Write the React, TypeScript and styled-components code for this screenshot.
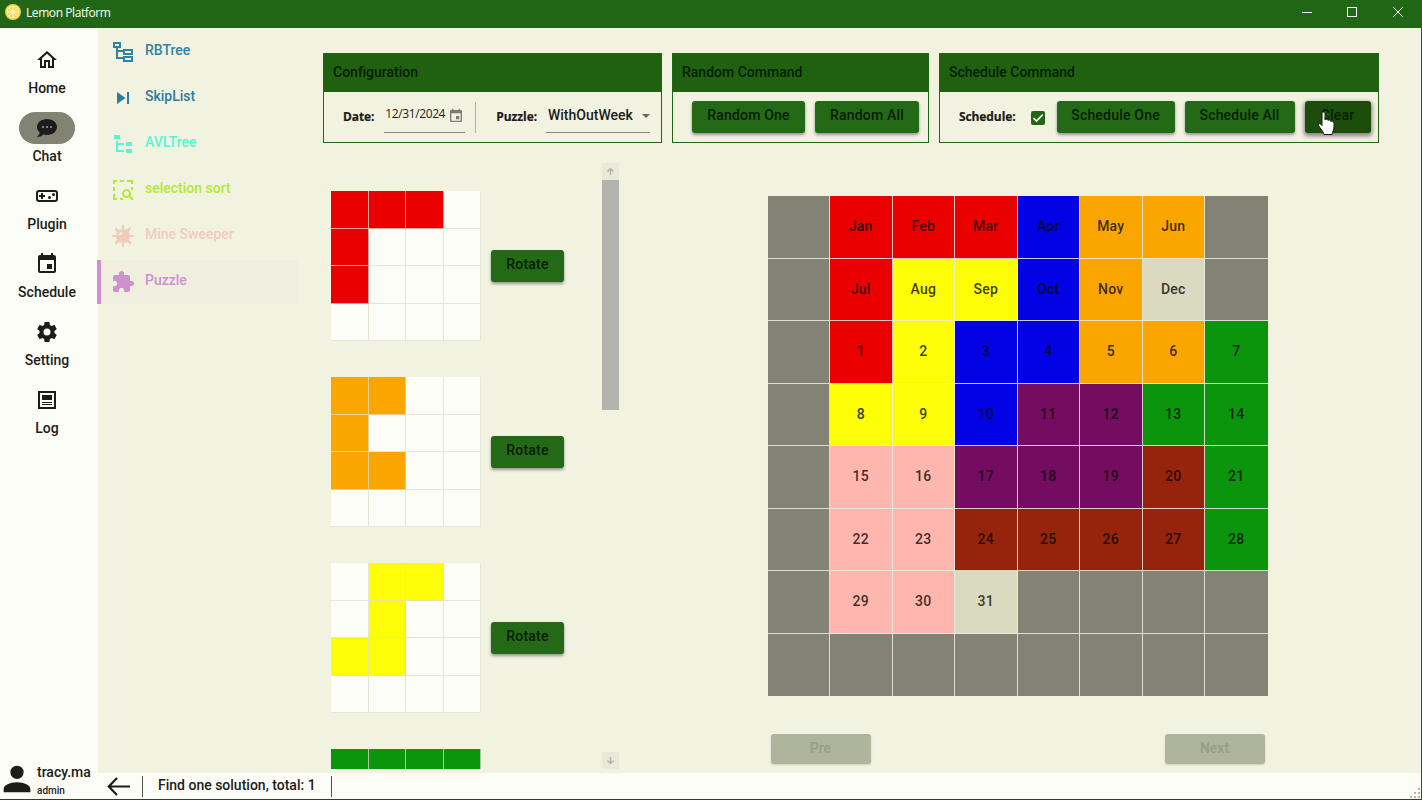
import React from 'react';
import styled, { createGlobalStyle } from 'styled-components';

const colors = {
  green: '#206614',
  greenHeader: '#1f610e',
  surface: '#f2f2e0',
  paper: '#fdfdf8',
  ink: '#1c1c18',
  wall: '#828275',
};

const GlobalStyle = createGlobalStyle`
  * { box-sizing: border-box; }
  body { margin: 0; overflow: hidden; background: ${colors.surface}; }
`;

const Window = styled.div`
  width: 1422px;
  height: 800px;
  display: flex;
  flex-direction: column;
  border-right: 1px solid ${colors.green};
  border-bottom: 1px solid #1c4d18;
  background: ${colors.surface};
  color: ${colors.ink};
  font: 500 14px/20px Roboto, sans-serif;
  overflow: hidden;
`;

const TitleBar = styled.header`
  height: 28px;
  flex: none;
  display: flex;
  align-items: center;
  padding: 0 15px 4px 5px;
  background: ${colors.green};
  color: #fff;
  font: 400 12px/16px 'Open Sans', 'Noto Sans', sans-serif;
`;
const AppName = styled.span`
  margin-left: 5px;
  padding-top: 2px;
  letter-spacing: -0.42px;
  flex: 1;
`;
const WindowButtons = styled.div`
  display: flex;
  gap: 30px;
  svg { display: block; }
`;

const Body = styled.div`
  flex: 1;
  display: flex;
  min-height: 0;
`;

const Rail = styled.nav`
  width: 98px;
  flex: none;
  display: flex;
  flex-direction: column;
  padding-top: 16px;
  background: ${colors.paper};
`;
const RailItem = styled.div`
  width: 94px;
  height: 68px;
  display: flex;
  flex-direction: column;
  align-items: center;
`;
const RailIcon = styled.span<{ $active?: boolean }>`
  width: 56px;
  height: 32px;
  border-radius: 16px;
  display: flex;
  align-items: center;
  justify-content: center;
  background: ${(p) => (p.$active ? '#828275' : 'transparent')};
`;
const RailLabel = styled.span`
  margin-top: 2px;
`;
const User = styled.div`
  margin-top: auto;
  height: 38px;
  display: flex;
  align-items: flex-start;
  padding-left: 1px;
`;
const UserText = styled.div`
  margin-left: 4px;
  display: flex;
  flex-direction: column;
  line-height: 17px;
  padding-top: 3px;
`;
const Role = styled.span`
  font-size: 10px;
  line-height: 19px;
`;

const Main = styled.div`
  flex: 1;
  display: flex;
  flex-direction: column;
  min-width: 0;
`;
const Workspace = styled.div`
  flex: 1;
  display: flex;
  min-height: 0;
`;

const Menu = styled.aside`
  width: 200px;
  flex: none;
  padding-top: 2px;
`;
const MenuItem = styled.div<{ $color: string; $active?: boolean }>`
  height: 44px;
  margin-bottom: 2px;
  margin-left: -1px;
  display: flex;
  align-items: center;
  padding-bottom: 4px;
  padding-left: ${(p) => (p.$active ? '10px' : '14px')};
  border-left: ${(p) => (p.$active ? `4px solid ${p.$color}` : '0')};
  background: ${(p) => (p.$active ? '#efeedf' : 'transparent')};
  color: ${(p) => p.$color};
  svg { margin-top: 3px; }
`;
const MenuText = styled.span`
  margin-left: 10px;
`;

const Page = styled.main`
  flex: 1;
  display: flex;
  flex-direction: column;
  padding: 25px 42px 4px 25px;
  min-width: 0;
`;
const Groups = styled.div`
  display: flex;
  gap: 10px;
  height: 90px;
  flex: none;
`;
const Group = styled.section<{ $width: number }>`
  width: ${(p) => p.$width}px;
  border: 1px solid ${colors.green};
`;
const GroupTitle = styled.h2`
  margin: 0;
  height: 38px;
  padding: 0 9px 3px;
  display: flex;
  align-items: center;
  background: ${colors.greenHeader};
  color: #071d05;
  font: inherit;
`;
const GroupBody = styled.div`
  height: 50px;
  display: flex;
  align-items: center;
  padding-left: 19px;
`;
const FieldLabel = styled.span`
  margin-top: -1px;
  font: 700 12px/16px 'Open Sans', 'Noto Sans', sans-serif;
  letter-spacing: -0.1px;
  -webkit-text-stroke: 0.2px ${colors.ink};
`;
const DateField = styled.div`
  width: 81px;
  height: 31px;
  margin: 0 10px 0 10px;
  padding: 0 1px 0 1px;
  display: flex;
  justify-content: space-between;
  border-bottom: 1px solid #85857f;
  font: 400 12px/23px 'Open Sans', 'Noto Sans', sans-serif;
  letter-spacing: -0.4px;
  svg { margin-top: 6px; }
`;
const Divider = styled.span`
  width: 1px;
  height: 31px;
  margin-right: 20px;
  background: #b4b4ae;
`;
const SelectField = styled.div`
  width: 104px;
  height: 32px;
  margin-left: 9px;
  padding: 0 0 3px 2px;
  display: flex;
  align-items: center;
  justify-content: space-between;
  border-bottom: 1px solid #85857f;
  svg { margin-top: 2px; }
`;
const Checkbox = styled.span`
  width: 14px;
  height: 14px;
  margin: 2px 12px 0 15px;
  border-radius: 2px;
  background: ${colors.green};
  svg { display: block; }
`;
const Button = styled.button<{ $width: number; $pressed?: boolean }>`
  width: ${(p) => p.$width}px;
  height: 32px;
  flex: none;
  padding: 0 0 4px;
  border: 0;
  border-radius: 3px;
  background: ${(p) => (p.$pressed ? '#1c4d0a' : '#246915')};
  color: #071d05;
  font: inherit;
  letter-spacing: 0.2px;
  box-shadow: ${(p) => (p.$pressed ? '0 2px 4px 1px rgba(50,50,60,.6)' : '0 2px 3px rgba(60,60,80,.5)')};
  & + & { margin-left: 10px; }
`;
const Hand = styled.svg`
  position: absolute;
  left: 1317px;
  top: 111px;
`;

const Columns = styled.div`
  flex: 1;
  display: flex;
  min-height: 0;
`;
const Pieces = styled.div`
  width: 279px;
  height: 606px;
  margin-top: 20px;
  padding: 28px 0 0 8px;
  overflow: hidden;
`;
const PieceRow = styled.div`
  height: 150px;
  margin-bottom: 36px;
  display: flex;
  align-items: center;
  gap: 10px;
`;
const PieceGrid = styled.div`
  width: 150px;
  height: 150px;
  flex: none;
  display: grid;
  grid-template: repeat(4, 37.5px) / repeat(4, 37.5px);
`;
const PieceCell = styled.div<{ $color: string }>`
  background: ${(p) => p.$color};
  border: solid rgba(222, 222, 206, 0.75);
  border-width: 0 1px 1px 0;
`;
const ScrollBar = styled.div`
  width: 17px;
  height: 606px;
  margin-top: 20px;
  display: flex;
  flex-direction: column;
  justify-content: space-between;
  background: transparent;
`;
const ScrollArrow = styled.span`
  height: 17px;
  display: flex;
  align-items: center;
  justify-content: center;
  background: #e9e9d9;
`;
const ScrollThumb = styled.span`
  height: 230px;
  margin-bottom: auto;
  background: #b4b4ae;
`;

const BoardArea = styled.div`
  margin-left: 148.5px;
  padding-top: 53px;
  width: 500px;
`;
const Board = styled.div`
  display: grid;
  width: 500px;
  height: 500px;
  grid-template: repeat(8, 62.5px) / repeat(8, 62.5px);
`;
const BoardCell = styled.div<{ $color: string; $edge: boolean; $bottom: boolean }>`
  display: flex;
  align-items: center;
  justify-content: center;
  padding-bottom: 1px;
  background: ${(p) => p.$color};
  border: solid rgba(236, 236, 226, 0.85);
  border-width: 0 ${(p) => (p.$edge ? 0 : 1)}px ${(p) => (p.$bottom ? 0 : 1)}px 0;
  color: rgba(8, 8, 4, 0.8);
  letter-spacing: 0.2px;
`;
const Pager = styled.div`
  margin-top: 38px;
  padding: 0 3px;
  display: flex;
  justify-content: space-between;
`;
const PagerButton = styled.button`
  width: 100px;
  height: 30px;
  padding: 0 0 3px;
  border: 0;
  border-radius: 3px;
  background: #afb59c;
  color: #94a082;
  font: inherit;
  box-shadow: 0 1px 2px rgba(120, 120, 110, 0.3);
`;

const StatusBar = styled.footer`
  height: 26px;
  flex: none;
  display: flex;
  align-items: center;
  background: ${colors.paper};
  padding-left: 9px;
`;
const StatusText = styled.span`
  height: 21px;
  width: 190px;
  margin-left: 11px;
  padding-left: 15px;
  line-height: 19px;
  border: solid #55554e;
  border-width: 0 1px;
`;
const Grip = styled.svg`
  margin: auto 0 0 auto;
`;

type IconProps = { d: string; size?: number; fill?: string };
const Icon = ({ d, size = 24, fill = 'currentColor' }: IconProps) => (
  <svg width={size} height={size} viewBox="0 0 24 24" fill={fill} fillRule="evenodd">
    <path d={d} />
  </svg>
);

const paths = {
  home: 'M12 5.69l5 4.5V18h-2v-6H9v6H7v-7.81l5-4.5M12 3L2 12h3v8h6v-6h2v6h6v-8h3L12 3z',
  chat: 'M12 3C17.5 3 22 6.58 22 11S17.5 19 12 19C10.76 19 9.57 18.82 8.47 18.5C5.55 21 2 21 2 21C4.33 18.67 4.7 17.1 4.75 16.5C3.05 15.07 2 13.13 2 11C2 6.58 6.5 3 12 3M17 12V10H15V12H17M13 12V10H11V12H13M9 12V10H7V12H9Z',
  plugin: 'M4 6H20A3 3 0 0 1 23 9V15A3 3 0 0 1 20 18H4A3 3 0 0 1 1 15V9A3 3 0 0 1 4 6ZM4 8A1 1 0 0 0 3 9V15A1 1 0 0 0 4 16H20A1 1 0 0 0 21 15V9A1 1 0 0 0 20 8ZM6 9H8V11H10V13H8V15H6V13H4V11H6ZM18.5 9A1.5 1.5 0 1 1 18.5 12A1.5 1.5 0 0 1 18.5 9ZM14.5 12A1.5 1.5 0 1 1 14.5 15A1.5 1.5 0 0 1 14.5 12Z',
  calendar: 'M19 19H5V8H19M16 1V3H8V1H6V3H5C3.89 3 3 3.89 3 5V19A2 2 0 0 0 5 21H19A2 2 0 0 0 21 19V5C21 3.89 20.1 3 19 3H18V1M17 12H12V17H17V12Z',
  cog: 'M12 15.5A3.5 3.5 0 0 1 8.5 12A3.5 3.5 0 0 1 12 8.5A3.5 3.5 0 0 1 15.5 12A3.5 3.5 0 0 1 12 15.5M19.43 12.97C19.47 12.65 19.5 12.33 19.5 12C19.5 11.67 19.47 11.34 19.43 11L21.54 9.37C21.73 9.22 21.78 8.95 21.66 8.73L19.66 5.27C19.54 5.05 19.27 4.96 19.05 5.05L16.56 6.05C16.04 5.66 15.5 5.32 14.87 5.07L14.5 2.42C14.46 2.18 14.25 2 14 2H10C9.75 2 9.54 2.18 9.5 2.42L9.13 5.07C8.5 5.32 7.96 5.66 7.44 6.05L4.95 5.05C4.73 4.96 4.46 5.05 4.34 5.27L2.34 8.73C2.21 8.95 2.27 9.22 2.46 9.37L4.57 11C4.53 11.34 4.5 11.67 4.5 12C4.5 12.33 4.53 12.65 4.57 12.97L2.46 14.63C2.27 14.78 2.21 15.05 2.34 15.27L4.34 18.73C4.46 18.95 4.73 19.03 4.95 18.95L7.44 17.94C7.96 18.34 8.5 18.68 9.13 18.93L9.5 21.58C9.54 21.82 9.75 22 10 22H14C14.25 22 14.46 21.82 14.5 21.58L14.87 18.93C15.5 18.67 16.04 18.34 16.56 17.94L19.05 18.95C19.27 19.03 19.54 18.95 19.66 18.73L21.66 15.27C21.78 15.05 21.73 14.78 21.54 14.63L19.43 12.97Z',
  log: 'M3 3H21V21H3ZM5 5V19H19V5ZM7 7H17V12H7ZM7 14H17V15H7ZM7 16H17V17H7Z',
  treeOutline: 'M2 2H10V8H7V10H12V9H22V15H12V12H7V17H12V16H22V22H12V19H5V8H2ZM4 4V6H8V4ZM14 11V13H20V11ZM14 18V20H20V18Z',
  skip: 'M16 18H18V6H16M6 18L14.5 12L6 6V18Z',
  tree: 'M3 3H9V7H3V3M15 10H21V14H15V10M15 17H21V21H15V17M13 13H7V18H13V20H7L5 20V9H7V11H13V13Z',
  selection: 'M2 2H6V4H4V6H2ZM9 2H13V4H9ZM16 2H22V6H20V4H16ZM2 9H4V13H2ZM20 9H22V12H20ZM2 16H4V20H6V22H2ZM9 20H12V22H9ZM15.5 11A4.5 4.5 0 0 1 19.35 17.82L22.6 21.1L21.2 22.5L17.9 19.3A4.5 4.5 0 1 1 15.5 11M15.5 13A2.5 2.5 0 1 0 15.5 18A2.5 2.5 0 0 0 15.5 13Z',
  mine: 'M11 1H13V5L15.5 5.8L18.5 3L20 4.5L17.8 7.6L19 11H23V13H19L18 16L20.5 19L19 20.5L16 18L13 19V23H11V19L8 18L5 20.5L3.5 19L6 16L5 13H1V11H5L6 8L3.5 5L5 3.5L8 6L11 5ZM8 11H10L12 8L9 8.5Z',
  puzzle: 'M20.5 11H19V7C19 5.89 18.1 5 17 5H13V3.5A2.5 2.5 0 0 0 10.5 1A2.5 2.5 0 0 0 8 3.5V5H4A2 2 0 0 0 2 7V10.8H3.5C5 10.8 6.2 12 6.2 13.5C6.2 15 5 16.2 3.5 16.2H2V20A2 2 0 0 0 4 22H7.8V20.5C7.8 19 9 17.8 10.5 17.8C12 17.8 13.2 19 13.2 20.5V22H17A2 2 0 0 0 19 20V16H20.5A2.5 2.5 0 0 0 23 13.5A2.5 2.5 0 0 0 20.5 11Z',
  account: 'M12 4A4 4 0 0 1 16 8A4 4 0 0 1 12 12A4 4 0 0 1 8 8A4 4 0 0 1 12 4M12 14C16.42 14 20 15.79 20 18V20H4V18C4 15.79 7.58 14 12 14Z',
};

const railItems: [string, string][] = [
  ['Home', paths.home],
  ['Chat', paths.chat],
  ['Plugin', paths.plugin],
  ['Schedule', paths.calendar],
  ['Setting', paths.cog],
  ['Log', paths.log],
];

const menuItems: [string, string, string][] = [
  ['RBTree', paths.treeOutline, '#2f83a4'],
  ['SkipList', paths.skip, '#2b7ca3'],
  ['AVLTree', paths.tree, '#57f5d5'],
  ['selection sort', paths.selection, '#b3e932'],
  ['Mine Sweeper', paths.mine, '#f2cbbf'],
  ['Puzzle', paths.puzzle, '#cd91cc'],
];

const tints: Record<string, string> = {
  R: '#eb0000', O: '#fba500', Y: '#fdfd08', G: '#0a950c', B: '#0202e4',
  P: '#740c62', N: '#96240c', K: '#ffb6ae', L: '#dadac0', W: colors.wall, '.': colors.paper,
};

const pieces = [
  { shape: 'RRR.R...R.......', rotatable: true },
  { shape: 'OO..O...OO......', rotatable: true },
  { shape: '.YY..Y..YY......', rotatable: true },
  { shape: 'GGGG............', rotatable: false },
];

const boardColors = 'WRRRBOOW' + 'WRYYBOLW' + 'WRYBBOOG' + 'WYYBPPGG' + 'WKKPPPNG' + 'WKKNNNNG' + 'WKKLWWWW' + 'WWWWWWWW';
const months = [['Jan', 'Feb', 'Mar', 'Apr', 'May', 'Jun'], ['Jul', 'Aug', 'Sep', 'Oct', 'Nov', 'Dec']];
const cellText = (i: number) => {
  const row = Math.floor(i / 8);
  const col = i % 8;
  if (col === 0) return '';
  if (row < 2) return months[row][col - 1] ?? '';
  const day = (row - 2) * 7 + col;
  return day <= 31 ? String(day) : '';
};

const Lemon = () => (
  <svg width="16" height="16" viewBox="0 0 16 16">
    <circle cx="8" cy="8" r="8" fill="#f5cf45" />
    <circle cx="8" cy="8" r="6.4" fill="#fff3b0" />
    <circle cx="8" cy="8" r="5.6" fill="#f7d75c" />
    <path d="M8 2v12M2 8h12M3.8 3.8l8.4 8.4M12.2 3.8l-8.4 8.4" stroke="#fff6c8" strokeWidth="1" />
  </svg>
);

const Arrow = ({ down }: { down?: boolean }) => (
  <svg width="9" height="9" viewBox="0 0 9 9" fill="none" stroke="#b4b4ae" strokeWidth="1.5">
    <path d={down ? 'M4.5 1V7.5M1.5 4.5L4.5 7.5L7.5 4.5' : 'M4.5 8V1.5M1.5 4.5L4.5 1.5L7.5 4.5'} />
  </svg>
);

export default function App() {
  return (
    <Window>
      <GlobalStyle />
      <TitleBar>
        <Lemon />
        <AppName>Lemon Platform</AppName>
        <WindowButtons>
          <svg width="16" height="12" viewBox="0 0 16 12" stroke="#fff"><path d="M4 6.5H14" /></svg>
          <svg width="16" height="12" viewBox="0 0 16 12" stroke="#fff" fill="none"><rect x="3.5" y="1.5" width="9" height="9" /></svg>
          <svg width="16" height="12" viewBox="0 0 16 12" stroke="#fff"><path d="M3 1L13 11M13 1L3 11" /></svg>
        </WindowButtons>
      </TitleBar>
      <Body>
        <Rail>
          {railItems.map(([label, d]) => (
            <RailItem key={label}>
              <RailIcon $active={label === 'Chat'}><Icon d={d} /></RailIcon>
              <RailLabel>{label}</RailLabel>
            </RailItem>
          ))}
          <User>
            <svg width="32" height="36" viewBox="2.4 1.2 19.2 21.6" fill={colors.ink}><path d={paths.account} /></svg>
            <UserText>
              <span>tracy.ma</span>
              <Role>admin</Role>
            </UserText>
          </User>
        </Rail>
        <Main>
          <Workspace>
            <Menu>
              {menuItems.map(([label, d, color]) => (
                <MenuItem key={label} $color={color} $active={label === 'Puzzle'}>
                  <Icon d={d} />
                  <MenuText>{label}</MenuText>
                </MenuItem>
              ))}
            </Menu>
            <Page>
              <Groups>
                <Group $width={339}>
                  <GroupTitle>Configuration</GroupTitle>
                  <GroupBody>
                    <FieldLabel>Date:</FieldLabel>
                    <DateField>
                      <span>12/31/2024</span>
                      <Icon d={paths.calendar} size={16} fill="#7a7a76" />
                    </DateField>
                    <Divider />
                    <FieldLabel>Puzzle:</FieldLabel>
                    <SelectField>
                      <span>WithOutWeek</span>
                      <svg width="8" height="4" viewBox="0 0 8 4" fill="#666661"><path d="M0 0H8L4 4Z" /></svg>
                    </SelectField>
                  </GroupBody>
                </Group>
                <Group $width={257}>
                  <GroupTitle>Random Command</GroupTitle>
                  <GroupBody>
                    <Button $width={113}>Random One</Button>
                    <Button $width={104}>Random All</Button>
                  </GroupBody>
                </Group>
                <Group $width={440}>
                  <GroupTitle>Schedule Command</GroupTitle>
                  <GroupBody>
                    <FieldLabel>Schedule:</FieldLabel>
                    <Checkbox>
                      <svg width="14" height="14" viewBox="0 0 14 14" fill="none" stroke="#fff" strokeWidth="1.6"><path d="M2.5 7L5.5 10L11.8 3.5" /></svg>
                    </Checkbox>
                    <Button $width={118}>Schedule One</Button>
                    <Button $width={110}>Schedule All</Button>
                    <Button $width={66} $pressed>Clear</Button>
                  </GroupBody>
                </Group>
              </Groups>
              <Columns>
                <Pieces>
                  {pieces.map(({ shape, rotatable }) => (
                    <PieceRow key={shape}>
                      <PieceGrid>
                        {[...shape].map((c, i) => <PieceCell key={i} $color={tints[c]} />)}
                      </PieceGrid>
                      {rotatable && <Button $width={73}>Rotate</Button>}
                    </PieceRow>
                  ))}
                </Pieces>
                <ScrollBar>
                  <ScrollArrow><Arrow /></ScrollArrow>
                  <ScrollThumb />
                  <ScrollArrow><Arrow down /></ScrollArrow>
                </ScrollBar>
                <BoardArea>
                  <Board>
                    {[...boardColors].map((c, i) => (
                      <BoardCell key={i} $color={tints[c]} $edge={i % 8 === 7} $bottom={i > 55}>
                        {cellText(i)}
                      </BoardCell>
                    ))}
                  </Board>
                  <Pager>
                    <PagerButton>Pre</PagerButton>
                    <PagerButton>Next</PagerButton>
                  </Pager>
                </BoardArea>
              </Columns>
            </Page>
          </Workspace>
          <StatusBar>
            <svg width="24" height="20" viewBox="0 0 24 20" fill="none" stroke={colors.ink} strokeWidth="2.2"><path d="M23 10.5H2M10 2L1.8 10.5L10 19" /></svg>
            <StatusText>Find one solution, total: 1</StatusText>
            <Grip width="12" height="12" viewBox="0 0 12 12" fill="#b5b5b0"><path d="M9 1h2v2H9zM9 5h2v2H9zM5 5h2v2H5zM9 9h2v2H9zM5 9h2v2H5zM1 9h2v2H1z" /></Grip>
          </StatusBar>
        </Main>
      </Body>
      <Hand width="20" height="25" viewBox="0 0 20 25" fill="#fff" stroke="#1a1a1a" strokeWidth="1">
        <path d="M5 2.5C5 .5 8 .5 8 2.5V9C8.5 7.8 10.8 8 11 9.4C11.8 8.6 13.6 9 13.8 10.4C15 9.8 17 10.4 17 12.2V16C17 19 15.5 20 15 23.5H7C6.5 20.5 3.5 18 1.5 14.5C.8 13 2.8 12 4 13.4L5 14.6Z" />
      </Hand>
    </Window>
  );
}
